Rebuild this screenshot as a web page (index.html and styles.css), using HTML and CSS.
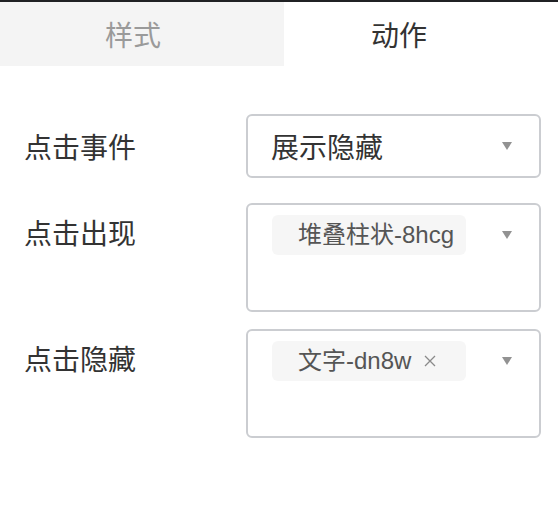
FILE: index.html
```html
<!DOCTYPE html>
<html lang="zh">
<head>
<meta charset="utf-8">
<link rel="stylesheet" href="styles.css">
</head>
<body>
<div class="topline"></div>
<div class="tabs">
  <div class="tab tab-style">样式</div>
  <div class="tab tab-action">动作</div>
</div>
<div class="form">
  <div class="row row-single">
    <div class="label">点击事件</div>
    <div class="select single">
      <span class="value">展示隐藏</span>
      <span class="arrow-wrap"><span class="arrow"></span></span>
    </div>
  </div>
  <div class="row row-multi first-multi">
    <div class="label label-multi">点击出现</div>
    <div class="select multi">
      <span class="tag">堆叠柱状-8hcg</span>
      <span class="arrow-wrap tall"><span class="arrow"></span></span>
    </div>
  </div>
  <div class="row row-multi second-multi">
    <div class="label label-multi">点击隐藏</div>
    <div class="select multi">
      <span class="tag">文字-dn8w<svg class="close" width="12" height="12" viewBox="0 0 12 12"><path d="M1 1 L11 11 M11 1 L1 11" stroke="#8a8a8a" stroke-width="1.3" fill="none"/></svg></span>
      <span class="arrow-wrap tall"><span class="arrow"></span></span>
    </div>
  </div>
</div>
</body>
</html>
```
FILE: styles.css
```css
html, body {
  margin: 0;
  padding: 0;
  background: #ffffff;
}
body {
  width: 558px;
  height: 532px;
  overflow: hidden;
  font-family: "Liberation Sans", "Noto Sans CJK SC", sans-serif;
  color: #333333;
}
.topline {
  height: 2px;
  background: #202124;
}
.tabs {
  display: flex;
  height: 64px;
}
.tab {
  display: flex;
  align-items: center;
  font-size: 28px;
  box-sizing: border-box;
}
.tab-style {
  width: 284px;
  background: #f4f4f4;
  color: #9a9a9a;
  padding-left: 105px;
}
.tab-action {
  flex: 1;
  background: #ffffff;
  color: #333333;
  padding-left: 87px;
}
.form {
  padding: 48px 17px 0 24px;
}
.row {
  display: flex;
}
.row-single {
  align-items: center;
}
.row-multi {
  align-items: flex-start;
}
.first-multi {
  margin-top: 25px;
}
.second-multi {
  margin-top: 17px;
}
.label {
  width: 222px;
  font-size: 28px;
  color: #333333;
  flex-shrink: 0;
}
.label-multi {
  margin-top: 12px;
  line-height: 40px;
}
.select {
  flex: 1;
  box-sizing: border-box;
  border: 2px solid #cbcdd1;
  border-radius: 6px;
  display: flex;
  padding-left: 24px;
  padding-right: 27px;
}
.single {
  height: 64px;
  align-items: center;
}
.value {
  flex: 1;
  font-size: 28px;
  color: #333333;
  margin-left: -1px;
}
.multi {
  height: 109px;
  align-items: flex-start;
  padding-top: 10px;
}
.tag {
  width: 194px;
  height: 40px;
  box-sizing: border-box;
  padding-left: 26px;
  background: #f6f6f6;
  border-radius: 6px;
  font-size: 24px;
  line-height: 40px;
  color: #555555;
  white-space: nowrap;
  overflow: hidden;
  flex-shrink: 0;
  display: flex;
  align-items: center;
}
.close {
  margin-left: 13px;
  flex-shrink: 0;
}
.arrow-wrap {
  margin-left: auto;
  display: flex;
  align-items: center;
}
.tall {
  height: 40px;
}
.arrow {
  width: 0;
  height: 0;
  border-left: 5.5px solid transparent;
  border-right: 5.5px solid transparent;
  border-top: 8px solid #929292;
}
```
